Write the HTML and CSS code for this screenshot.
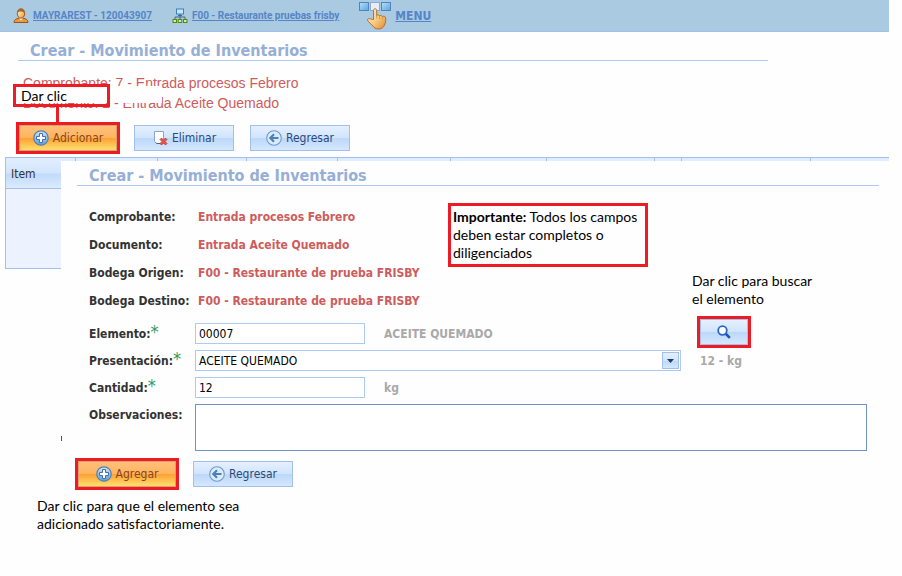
FILE: index.html
```html
<!DOCTYPE html>
<html lang="es">
<head>
    <meta charset="UTF-8">
    <meta name="viewport" content="width=device-width, initial-scale=1">
    <title>Crear - Movimiento de Inventarios</title>
    <link rel="stylesheet" href="styles.css">
</head>
<body>

    <!-- Shared icons -->
    <svg class="icon-defs" width="0" height="0" aria-hidden="true">
        <defs>
            <linearGradient id="ball" x1="0" y1="0" x2="0" y2="1">
                <stop offset="0" stop-color="#d3e8fa"/>
                <stop offset="1" stop-color="#5c9bd6"/>
            </linearGradient>
            <linearGradient id="skin" x1="0" y1="0" x2="1" y2="1">
                <stop offset="0" stop-color="#fff0cf"/>
                <stop offset="0.5" stop-color="#f9cd86"/>
                <stop offset="1" stop-color="#e08b2a"/>
            </linearGradient>
            <linearGradient id="tile" x1="0" y1="0" x2="1" y2="1">
                <stop offset="0" stop-color="#b5e0fa"/>
                <stop offset="1" stop-color="#5aa5dc"/>
            </linearGradient>
            <symbol id="icon-add" viewBox="0 0 16 16">
                <circle cx="8" cy="8" r="7.2" fill="url(#ball)" stroke="#4f7fb5" stroke-width="1.2"/>
                <path d="M6.5 3.5h3v3h3v3h-3v3h-3v-3h-3v-3h3z" fill="#fff" stroke="#3f73ab" stroke-width="1"/>
            </symbol>
            <symbol id="icon-back" viewBox="0 0 16 16">
                <circle cx="8" cy="8" r="7.3" fill="#dcebfc" stroke="#6c9acb" stroke-width="1.1"/>
                <path d="M12.5 8H5M8 4.3L4.3 8 8 11.7" fill="none" stroke="#4c80ba" stroke-width="2.2"/>
            </symbol>
        </defs>
    </svg>

    <div class="page">
        <header class="topbar">
            <a href="#" class="topbar-link">
                <svg width="16" height="16" viewBox="0 0 16 16" aria-hidden="true">
                    <path d="M1 14.5c0-2.7 2-3.8 5-4.3h4c3 .5 5 1.6 5 4.3z" fill="#ee9a3c" stroke="#9c5518"/>
                    <path d="M6 10l2 2.5L10 10z" fill="#fff"/>
                    <ellipse cx="8" cy="5.5" rx="3.7" ry="4.7" fill="url(#skin)" stroke="#9c5518"/>
                    <path d="M4.3 5C4 2 5.5.8 8 .8s4 1.4 3.7 4.4C10.5 4 9 3.4 7.5 3.4 6 3.4 5 4 4.3 5z" fill="#a8662c"/>
                </svg>
                <span>MAYRAREST - 120043907</span>
            </a>
            <a href="#" class="topbar-link">
                <svg width="16" height="16" viewBox="0 0 16 16" aria-hidden="true">
                    <rect x="4.5" y="1" width="7" height="5" fill="#c9e7fb" stroke="#3d7fc4"/>
                    <path d="M6 7.5h4M8 6v3M3 11V9h10v2M8 9v2" fill="none" stroke="#45678c"/>
                    <rect x="1" y="11.5" width="3.5" height="3" fill="#d8f08c" stroke="#4f8a10"/>
                    <rect x="6.2" y="11.5" width="3.5" height="3" fill="#d8f08c" stroke="#4f8a10"/>
                    <rect x="11.5" y="11.5" width="3.5" height="3" fill="#d8f08c" stroke="#4f8a10"/>
                </svg>
                <span>F00 - Restaurante pruebas frisby</span>
            </a>
            <a href="#" class="topbar-link menu-link">
                <svg width="32" height="29" viewBox="0 0 32 29" aria-hidden="true">
                    <rect x="0.5" y="1.5" width="9" height="8" fill="url(#tile)" stroke="#4f86ba"/>
                    <rect x="11.5" y="1.5" width="9" height="8" fill="#e6ecf8" stroke="#8fa8cc"/>
                    <rect x="22.5" y="1.5" width="9" height="8" fill="url(#tile)" stroke="#4f86ba"/>
                    <path d="M14.5 18.5V9.500c0-2.300 3.200-2.300 3.200 0v5c.8-1 2.500-.8 2.900.5.700-.9 2.400-.6 2.800.6.900-.8 3-.3 3.200 1.300.3 3 0 5.100-1.200 7.300-1 2.300-3 3.800-5.700 3.800-3 0-4.800-1.200-6-3.200L8.800 20c-1-1.900 1-3.200 2.700-2z" fill="url(#skin)" stroke="#ad6820" stroke-width="0.9"/>
                    <path d="M17.7 14.5v3M20.6 15v3M23.4 15.6v3" stroke="#c98a3c" stroke-width="0.8"/>
                </svg>
                <span>MENU</span>
            </a>
        </header>

        <h1 class="title page-title">Crear - Movimiento de Inventarios</h1>

        <div class="summary">
            <p>Comprobante: 7 - Entrada procesos Febrero</p>
            <p>Documento: 2 - Entrada Aceite Quemado</p>
            <div class="tip-clic"><span>Dar clic</span></div>
        </div>

        <div class="toolbar">
            <button type="button" class="btn btn-primary marked">
                <svg width="16" height="16" aria-hidden="true"><use href="#icon-add"/></svg>Adicionar
            </button>
            <button type="button" class="btn">
                <svg width="16" height="16" viewBox="0 0 16 16" aria-hidden="true">
                    <path d="M2.5 1.5h9v12h-7l-2-2z" fill="#fff" stroke="#8ba6ce"/>
                    <path d="M3 12l2 2h3v-1H5z" fill="#41669c"/>
                    <path d="M8 9.5l1.5-1.5L11.5 10l2-2L15 9.5l-2 2 2 2-1.5 1.5-2-2-2 2L8 13.5l2-2z" fill="#e2564b" stroke="#b23a34" stroke-width="0.8"/>
                </svg>Eliminar
            </button>
            <button type="button" class="btn">
                <svg width="16" height="16" aria-hidden="true"><use href="#icon-back"/></svg>Regresar
            </button>
        </div>

        <div class="stack">
            <table class="items">
                <colgroup>
                    <col class="c70"><col class="c82"><col class="c89"><col class="c91"><col class="c113">
                    <col class="c96"><col class="c108"><col class="c27"><col class="c129"><col>
                </colgroup>
                <thead>
                    <tr><th>Item</th><th></th><th></th><th></th><th></th><th></th><th></th><th></th><th></th><th></th></tr>
                </thead>
                <tbody>
                    <tr><td colspan="10"></td></tr>
                </tbody>
            </table>

            <form class="panel">
                <h2 class="title panel-title">Crear - Movimiento de Inventarios</h2>

                <dl class="info">
                    <dt>Comprobante:</dt><dd>Entrada procesos Febrero</dd>
                    <dt>Documento:</dt><dd>Entrada Aceite Quemado</dd>
                    <dt>Bodega Origen:</dt><dd>F00 - Restaurante de prueba FRISBY</dd>
                    <dt>Bodega Destino:</dt><dd>F00 - Restaurante de prueba FRISBY</dd>
                </dl>

                <div class="fields">
                    <label for="elemento">Elemento:<sup>*</sup></label>
                    <input type="text" id="elemento" value="00007">
                    <span class="hint">ACEITE QUEMADO</span>
                    <button type="button" class="btn btn-search marked" aria-label="Buscar">
                        <svg width="14" height="14" viewBox="0 0 14 14" aria-hidden="true">
                            <path d="M8.5 8.5l4.3 4.3" stroke="#1d57b5" stroke-width="2.6"/>
                            <circle cx="5.5" cy="5.5" r="4.3" fill="#fff" stroke="#2e66c4" stroke-width="1.8"/>
                        </svg>
                    </button>

                    <label for="presentacion">Presentación:<sup>*</sup></label>
                    <div class="select-box">
                        <select id="presentacion">
                            <option>ACEITE QUEMADO</option>
                        </select>
                        <span class="arrow"><svg width="7" height="4" viewBox="0 0 7 4" aria-hidden="true"><path d="M0 0h7L3.5 4z" fill="#1f3c66"/></svg></span>
                    </div>
                    <span class="hint">12 - kg</span>

                    <label for="cantidad">Cantidad:<sup>*</sup></label>
                    <input type="text" id="cantidad" value="12">
                    <span class="hint wide">kg</span>

                    <label for="observaciones">Observaciones:</label>
                    <textarea id="observaciones"></textarea>
                </div>

                <div class="actions">
                    <button type="button" class="btn btn-primary marked">
                        <svg width="16" height="16" aria-hidden="true"><use href="#icon-add"/></svg>Agregar
                    </button>
                    <button type="button" class="btn">
                        <svg width="16" height="16" aria-hidden="true"><use href="#icon-back"/></svg>Regresar
                    </button>
                </div>

                <p class="note tip-important"><b>Importante:</b> Todos los campos<br>deben estar completos o<br>diligenciados</p>
                <p class="note tip-search">Dar clic para buscar<br>el elemento</p>
            </form>
        </div>

        <p class="note tip-add">Dar clic para que el elemento sea<br>adicionado satisfactoriamente.</p>
    </div>

</body>
</html>
```

FILE: styles.css
```css
* {
    box-sizing: border-box;
}
body {
    margin: 0;
    background-color: #fefefe;
    font-family: "DejaVu Sans Condensed", "DejaVu Sans", sans-serif;
    font-size: 12px;
    color: #333;
}
p, dl, dd, h1, h2 {
    margin: 0;
}
.icon-defs {
    position: absolute;
}
.page {
    margin-right: 13px;
}

/* Top bar */
.topbar {
    display: flex;
    align-items: center;
    gap: 20px;
    height: 32px;
    padding-left: 13px;
    background-color: #a9cae1;
    border-bottom: 1px solid #a0c0e8;
}
.topbar-link {
    display: flex;
    align-items: center;
    gap: 4px;
    color: #5585c8;
    font-family: Roboto, sans-serif;
    font-size: 10px;
    font-weight: bold;
}
.menu-link {
    font-family: inherit;
    font-size: 12px;
}

.title {
    color: #95afd7;
    font-size: 16px;
    line-height: 18px;
    font-weight: bold;
    border-bottom: 1px solid #aecaf0;
    padding: 2px 0 0 12px;
}
.page-title {
    margin: 8px 121px 0 18px;
}

/* Voucher summary */
.summary {
    position: relative;
    padding: 12px 0 0 23px;
    color: #cd5c5c;
    font-family: "Liberation Sans", Arial, sans-serif;
    font-size: 14px;
    line-height: 20px;
}
.tip-clic {
    position: absolute;
    left: 13px;
    top: 25px;
    width: 149px;
    height: 17px;
    background-color: #fefefe;
    color: #000;
    font-family: Lato, sans-serif;
}
.tip-clic span {
    position: absolute;
    left: 0;
    top: -2px;
    width: 97px;
    height: 23px;
    padding-left: 5px;
    border: 3px solid #ed1c24;
    line-height: 17px;
}
.tip-clic::after {
    content: "";
    position: absolute;
    left: 43px;
    top: 21px;
    width: 3px;
    height: 16px;
    background-color: #ed1c24;
}

/* Buttons */
.btn {
    display: flex;
    align-items: center;
    justify-content: center;
    gap: 4px;
    width: 100px;
    height: 26px;
    padding: 0;
    border: 1px solid #a3c0e8;
    background: linear-gradient(#e5f0ff, #d0e4fd 50%, #bcd8fa 52%, #d5e7fe);
    color: #2b4a7a;
    font-family: inherit;
    font-size: 12px;
    cursor: pointer;
}
.btn-primary {
    width: 98px;
    margin: 0 1px;
    border-color: #dca06c;
    background: linear-gradient(#ffc07a, #ffb45f 48%, #ffa133 52%, #ffe070);
    color: #8a4520;
}
.marked {
    outline: 3px solid #ed1c24;
}
.toolbar {
    display: flex;
    gap: 16px;
    margin: 12px 0 6px 18px;
}

/* The form sits over the item table */
.stack {
    display: grid;
}
.items, .panel {
    grid-area: 1 / 1;
}
.items {
    align-self: start;
    margin-left: 5px;
    width: calc(100% - 5px);
    table-layout: fixed;
    border-collapse: collapse;
    border: 1px solid #a3c0e8;
    border-right: 0;
}
.items th {
    height: 31px;
    padding: 2px 5px 0;
    border: 1px solid #a3c0e8;
    border-right: 0;
    background: linear-gradient(#e1eeff, #d3e5fd 48%, #c0dafb 52%, #dcebff);
    color: #333;
    font-weight: normal;
    text-align: left;
}
.items td {
    height: 80px;
    background-color: #edf3fe;
}
.c27 { width: 27px; }
.c70 { width: 70px; }
.c82 { width: 82px; }
.c89 { width: 89px; }
.c91 { width: 91px; }
.c96 { width: 96px; }
.c108 { width: 108px; }
.c113 { width: 113px; }
.c129 { width: 129px; }

.panel {
    position: relative;
    margin: 4px 0 0 61px;
    padding: 4px 0 0;
    background-color: #fefefe;
}
/* Stub of the table's left rule */
.panel::before {
    content: "";
    position: absolute;
    left: 0;
    bottom: 46px;
    width: 1px;
    height: 5px;
    background-color: #555;
}
.panel-title {
    margin: 0 10px 0 16px;
}
.info {
    display: grid;
    grid-template-columns: 109px 1fr;
    margin: 17px 0 8px 28px;
    line-height: 28px;
    font-weight: bold;
}
.info dd {
    color: #cd5c5c;
}

/* Fields */
.fields {
    display: grid;
    grid-template-columns: 87px 170px 1fr 167px;
    grid-auto-rows: minmax(21px, auto);
    align-items: center;
    gap: 6px 19px;
    margin: 0 22px 0 28px;
}
.fields label {
    font-weight: bold;
    white-space: nowrap;
}
.fields sup {
    color: #2e9a5b;
    font-size: 18px;
    font-weight: normal;
    line-height: 0;
    vertical-align: 0;
}
.fields input, .fields select {
    width: 100%;
    height: 21px;
    padding: 0 3px;
    border: 1px solid #aecaf0;
    border-radius: 0;
    background-color: #fff;
    color: #000;
    font-family: inherit;
    font-size: 12px;
}
.fields select {
    appearance: none;
    display: block;
}
.select-box {
    position: relative;
    grid-column: 2 / 4;
}
.arrow {
    position: absolute;
    top: 2px;
    right: 2px;
    display: flex;
    align-items: center;
    justify-content: center;
    width: 17px;
    height: 17px;
    border: 1px solid #a3c0e8;
    background: linear-gradient(#e5f0ff, #d0e4fd 50%, #bcd8fa 52%, #d5e7fe);
    pointer-events: none;
}
.hint {
    color: #a9a9a9;
    font-weight: bold;
}
.wide {
    grid-column: 3 / 5;
}
.btn-search {
    align-self: start;
    width: 48px;
    margin: -4px 0;
}
.fields textarea {
    grid-column: 2 / 5;
    width: 100%;
    height: 47px;
    border: 1px solid #6f93c7;
    background-color: #fff;
    font-family: inherit;
    font-size: 12px;
    resize: none;
}
.fields label[for="observaciones"] {
    align-self: start;
    margin-top: 4px;
}
.actions {
    display: flex;
    gap: 16px;
    margin: 10px 0 0 16px;
}

/* Help notes */
.note {
    color: #000;
    font-family: Lato, sans-serif;
    font-size: 14px;
    line-height: 18px;
}
.tip-important {
    position: absolute;
    left: 387px;
    top: 42px;
    width: 200px;
    padding: 2px;
    border: 3px solid #ed1c24;
    white-space: nowrap;
}
.tip-search {
    position: absolute;
    right: 66px;
    top: 111px;
    width: 131px;
}
.tip-add {
    margin: 10px 0 0 37px;
}
```
